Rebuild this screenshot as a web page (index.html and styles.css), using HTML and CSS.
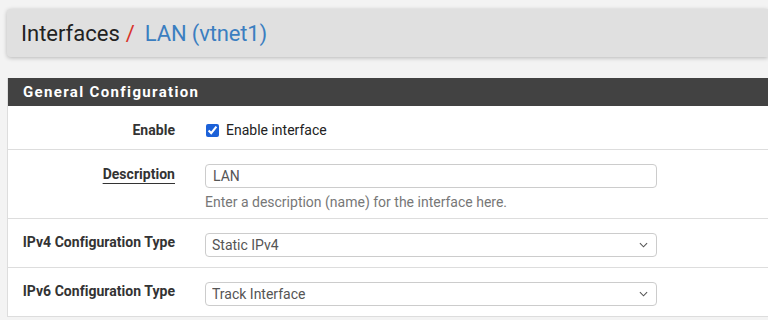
FILE: index.html
```html
<!DOCTYPE html>
<html lang="en">
<head>
    <meta charset="UTF-8">
    <meta name="viewport" content="width=device-width, initial-scale=1.0">
    <title>Interfaces / LAN (vtnet1)</title>
    <link rel="stylesheet" href="styles.css">
</head>
<body>
    <div class="page">
        <div class="breadcrumb">
            <span class="crumb">Interfaces</span>
            <span class="sep">/</span>
            <a class="crumb-link" href="#">LAN (vtnet1)</a>
        </div>

        <div class="panel">
            <div class="panel-heading">General Configuration</div>
            <div class="panel-body">
                <div class="row row-enable">
                    <label class="row-label" for="enable">Enable</label>
                    <div class="row-control">
                        <label class="check">
                            <input type="checkbox" id="enable" checked>
                            Enable interface
                        </label>
                    </div>
                </div>

                <div class="row row-descr">
                    <label class="row-label" for="descr"><span class="required">Description</span></label>
                    <div class="row-control">
                        <input class="field" type="text" id="descr" value="LAN">
                        <div class="help">Enter a description (name) for the interface here.</div>
                    </div>
                </div>

                <div class="row row-select">
                    <label class="row-label" for="type">IPv4 Configuration Type</label>
                    <div class="row-control">
                        <select class="field" id="type">
                            <option>Static IPv4</option>
                            <option>DHCP</option>
                            <option>None</option>
                        </select>
                    </div>
                </div>

                <div class="row row-select">
                    <label class="row-label" for="type6">IPv6 Configuration Type</label>
                    <div class="row-control">
                        <select class="field" id="type6">
                            <option>Track Interface</option>
                            <option>Static IPv6</option>
                            <option>None</option>
                        </select>
                    </div>
                </div>
            </div>
        </div>
    </div>
</body>
</html>
```

FILE: styles.css
```css
body {
    margin: 0;
    font-family: Roboto, "Liberation Sans", sans-serif;
    background-color: #f3f3f3;
    color: #333;
}

.page {
    padding: 9px 0 0 7px;
}

.breadcrumb {
    display: flex;
    align-items: center;
    height: 48px;
    padding-left: 14px;
    background-color: #e0e0e0;
    border-radius: 4px 0 0 4px;
    box-shadow: 0 1px 4px rgba(0, 0, 0, 0.25);
    font-size: 22px;
}

.crumb {
    color: #222;
}

.sep {
    color: #d9342b;
    margin: 0 10px 0 6px;
}

.crumb-link {
    color: #3b7ec0;
    text-decoration: none;
    letter-spacing: -0.15px;
}

.panel {
    margin-top: 21px;
    background-color: #fff;
    border-left: 1px solid #ddd;
}

.panel-heading {
    height: 28px;
    line-height: 28px;
    padding-left: 15px;
    background-color: #424242;
    color: #fff;
    font-size: 15px;
    font-weight: bold;
    letter-spacing: 1.35px;
}

.row {
    display: flex;
    border-bottom: 1px solid #ddd;
}

.row-label {
    width: 167px;
    padding-right: 30px;
    text-align: right;
    font-size: 14px;
    font-weight: bold;
    line-height: 20px;
    letter-spacing: 0.03px;
    color: #333;
}

.row-control {
    width: 452px;
    font-size: 14px;
    line-height: 20px;
}

.row-enable {
    padding: 14px 0 9px;
}

.row-descr {
    padding: 14px 0 6px;
}

.row-select {
    padding: 14px 0 10px;
}

.row-select .row-label {
    line-height: 18px;
}

.required {
    text-decoration: underline;
    text-underline-offset: 4px;
    text-decoration-thickness: 1px;
}

.check {
    display: flex;
    align-items: center;
    gap: 7px;
    color: #222;
    font-size: 14px;
}

.check input {
    margin: 0 0 0 1px;
    width: 13px;
    height: 13px;
    accent-color: #1c61d8;
}

.field {
    display: block;
    box-sizing: border-box;
    width: 100%;
    height: 24px;
    padding: 0 7px;
    border: 1px solid #ccc;
    border-radius: 4px;
    background-color: #fff;
    font-family: Roboto, "Liberation Sans", sans-serif;
    font-size: 14px;
    color: #555;
}

select.field {
    padding-left: 6px;
    appearance: none;
    background-image: url("data:image/svg+xml;charset=utf-8,%3Csvg xmlns='http://www.w3.org/2000/svg' viewBox='0 0 10 6'%3E%3Cpath d='M1 1l4 4 4-4' fill='none' stroke='%23555' stroke-width='1.2'/%3E%3C/svg%3E");
    background-repeat: no-repeat;
    background-position: right 8px center;
    background-size: 9px 6px;
}

.help {
    margin-top: 4px;
    color: #777;
}
```
